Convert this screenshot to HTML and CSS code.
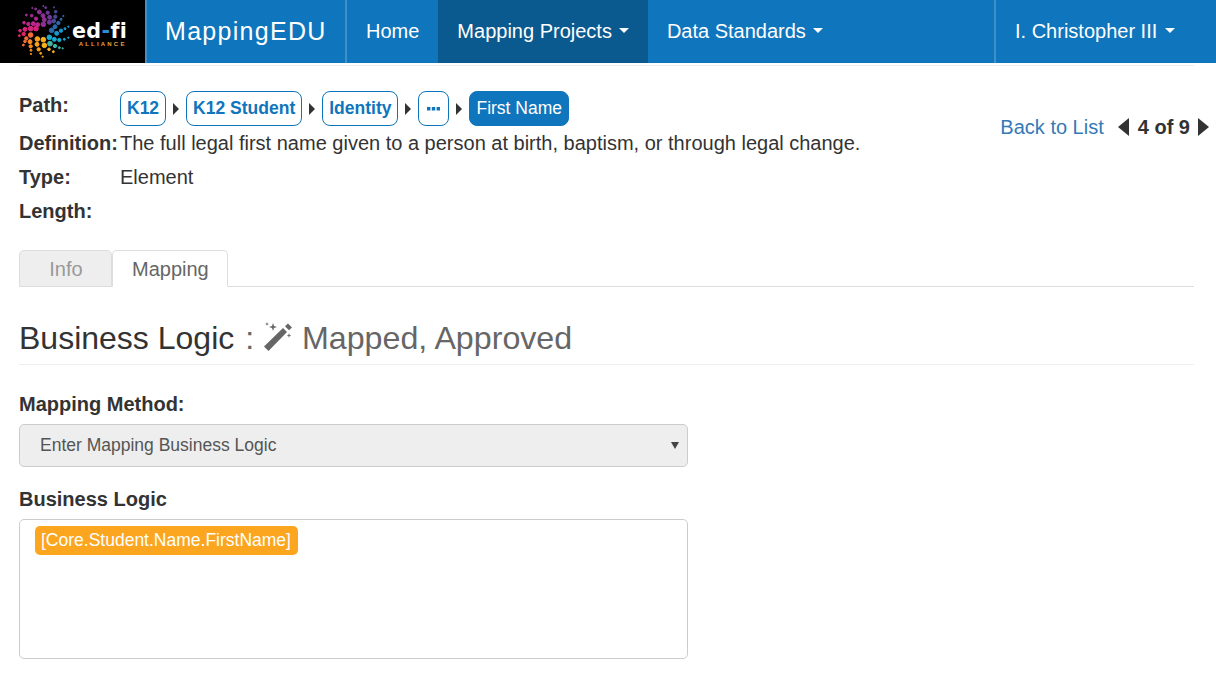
FILE: index.html
```html
<!DOCTYPE html>
<html lang="en">
<head>
    <meta charset="UTF-8">
    <title>MappingEDU</title>
    <link rel="stylesheet" href="styles.css">
</head>
<body>

    <nav class="navbar">
        <a class="logo" href="#">
            <svg viewBox="0 0 438 192" width="146" height="64">
                <g fill="#8e2f93" stroke="#8e2f93">
                    <circle cx="97" cy="24" r="2"/><circle cx="107" cy="27" r="3"/><circle cx="118" cy="36" r="6"/><circle cx="129" cy="47" r="6"/><circle cx="133" cy="59" r="6"/><circle cx="130" cy="73" r="7"/>
                </g>
                <g fill="#6f3a96" stroke="#6f3a96">
                    <circle cx="130" cy="18" r="2"/><circle cx="137" cy="23" r="3"/><circle cx="143" cy="38" r="5"/><circle cx="149" cy="52" r="6"/><circle cx="148" cy="67" r="6"/>
                </g>
                <g fill="#4a4a96" stroke="#4a4a96">
                    <circle cx="162" cy="22" r="2"/><circle cx="167" cy="35" r="4"/><circle cx="166" cy="50" r="5"/><circle cx="161" cy="63" r="6"/>
                </g>
                <g fill="#2a6cae" stroke="#2a6cae">
                    <circle cx="190" cy="48" r="2"/><circle cx="183" cy="58" r="3"/><circle cx="175" cy="69" r="5"/><circle cx="165" cy="80" r="6"/><circle cx="155" cy="91" r="7"/>
                </g>
                <g fill="#1a9ad0" stroke="#1a9ad0">
                    <circle cx="205" cy="80" r="2"/><circle cx="195" cy="86" r="3"/><circle cx="183" cy="92" r="5"/><circle cx="170" cy="100" r="6"/>
                </g>
                <g fill="#19aacf" stroke="#19aacf">
                    <circle cx="205" cy="113" r="2"/><circle cx="193" cy="118" r="3"/><circle cx="178" cy="120" r="5"/><circle cx="163" cy="118" r="6"/><circle cx="148" cy="112" r="7"/>
                </g>
                <g fill="#3fb5a5" stroke="#3fb5a5">
                    <circle cx="188" cy="145" r="2"/><circle cx="178" cy="143" r="3"/><circle cx="165" cy="138" r="5"/><circle cx="150" cy="131" r="7"/>
                </g>
                <g fill="#f7b21b" stroke="#f7b21b">
                    <circle cx="160" cy="155" r="3"/><circle cx="147" cy="148" r="4"/><circle cx="133" cy="136" r="7"/><circle cx="130" cy="119" r="7"/>
                </g>
                <g fill="#f9a11b" stroke="#f9a11b">
                    <circle cx="128" cy="170" r="2"/><circle cx="122" cy="160" r="3"/><circle cx="116" cy="148" r="5"/><circle cx="111" cy="133" r="6"/><circle cx="112" cy="117" r="7"/>
                </g>
                <g fill="#f58a1f" stroke="#f58a1f">
                    <circle cx="93" cy="162" r="2"/><circle cx="93" cy="151" r="3"/><circle cx="92" cy="139" r="5"/><circle cx="90" cy="125" r="6"/>
                </g>
                <g fill="#f26d3a" stroke="#f26d3a">
                    <circle cx="70" cy="135" r="3"/><circle cx="75" cy="124" r="4"/><circle cx="79" cy="115" r="5"/><circle cx="92" cy="105" r="7"/>
                </g>
                <g fill="#e5285f" stroke="#e5285f">
                    <circle cx="58" cy="107" r="3"/><circle cx="71" cy="102" r="5"/>
                </g>
                <g fill="#d9247c" stroke="#d9247c">
                    <circle cx="60" cy="92" r="4"/><circle cx="75" cy="88" r="6"/><circle cx="92" cy="86" r="7"/><circle cx="108" cy="86" r="7"/>
                </g>
                <g fill="#c0268f" stroke="#c0268f">
                    <circle cx="72" cy="68" r="4"/><circle cx="85" cy="72" r="5"/><circle cx="100" cy="71" r="6"/><circle cx="113" cy="74" r="6"/>
                </g>
                <g fill="#a92a94" stroke="#a92a94">
                    <circle cx="79" cy="45" r="3"/><circle cx="95" cy="47" r="4"/><circle cx="108" cy="56" r="5"/>
                </g>
                <text class="logo-name" x="216" y="113">ed<tspan class="logo-dash">-</tspan>fi</text>
                <text class="logo-sub" x="236" y="138">ALLIANCE</text>
            </svg>
        </a>
        <a class="brand" href="#">MappingEDU</a>
        <ul class="nav-links">
            <li><a href="#">Home</a></li>
            <li class="active"><a href="#">Mapping Projects <span class="caret"></span></a></li>
            <li><a href="#">Data Standards <span class="caret"></span></a></li>
        </ul>
        <a class="nav-user" href="#">I. Christopher III <span class="caret"></span></a>
    </nav>

    <div class="container">
        <div class="element-head">
            <div class="details">
                <div class="detail-row path-row">
                    <span class="detail-label">Path:</span>
                    <div class="path">
                        <a class="pill" href="#">K12</a>
                        <span class="arrow"></span>
                        <a class="pill" href="#">K12 Student</a>
                        <span class="arrow"></span>
                        <a class="pill" href="#">Identity</a>
                        <span class="arrow"></span>
                        <a class="pill pill-more" href="#">
                            <svg viewBox="0 0 13 4" width="13" height="4"><path d="M0 0h3.4v3.4H0zM4.8 0h3.4v3.4H4.8zM9.6 0H13v3.4H9.6z"/></svg>
                        </a>
                        <span class="arrow"></span>
                        <a class="pill pill-current" href="#">First Name</a>
                    </div>
                </div>
                <div class="detail-row">
                    <span class="detail-label">Definition:</span>
                    <span>The full legal first name given to a person at birth, baptism, or through legal change.</span>
                </div>
                <div class="detail-row">
                    <span class="detail-label">Type:</span>
                    <span>Element</span>
                </div>
                <div class="detail-row">
                    <span class="detail-label">Length:</span>
                </div>
            </div>
            <div class="pager">
                <a href="#">Back to List</a>
                <span class="pager-prev"></span>
                <b>4 of 9</b>
                <span class="pager-next"></span>
            </div>
        </div>

        <ul class="tabs">
            <li><a href="#">Info</a></li>
            <li class="active"><a href="#">Mapping</a></li>
        </ul>

        <h2 class="page-title">
            Business Logic <small>:
            <svg class="wand" viewBox="0 0 30 30" width="30" height="30">
                <path d="M1 24.5 20 6l4 4L5.500 29z"/>
                <path d="M22 4.200 25 1.500l4 4-3 2.800z"/>
                <path d="M10 1l1 3 3 1-3 1-1 3-1-3-3-1 3-1zM4 0l.5 1.500L6 2l-1.500.5L4 4l-.5-1.500L2 2l1.500-.5zM26 11l.6 1.900 1.900.6-1.900.6-.6 1.900-.6-1.900-1.900-.6 1.900-.6z"/>
            </svg>
            Mapped, Approved</small>
        </h2>

        <div class="form-group">
            <label>Mapping Method:</label>
            <div class="select-box">Enter Mapping Business Logic</div>
        </div>
        <div class="form-group">
            <label>Business Logic</label>
            <div class="logic-box">
                <span class="token">[Core.Student.Name.FirstName]</span>
            </div>
        </div>
    </div>

</body>
</html>
```

FILE: styles.css
```css
body {
    font-family: "Liberation Sans", Arial, sans-serif;
    font-size: 20px;
    line-height: 24px;
    color: #333;
    background-color: #fff;
    margin: 0;
}
a {
    text-decoration: none;
}
ul {
    list-style: none;
    margin: 0;
    padding: 0;
}
.navbar {
    display: flex;
    height: 63px;
    background-color: #0f75bc;
}
.navbar a {
    color: #fff;
}
.logo {
    display: block;
    width: 145px;
    height: 63px;
    overflow: hidden;
    background-color: #000;
}
.logo g {
    stroke-width: 3;
}
.logo-name {
    font-family: "DejaVu Sans", sans-serif;
    font-size: 62px;
    font-weight: bold;
    letter-spacing: 1px;
    fill: #fff;
}
.logo-dash {
    fill: #2a8fd0;
}
.logo-sub {
    font-family: "Liberation Sans", sans-serif;
    font-size: 18px;
    font-weight: bold;
    letter-spacing: 6.600px;
    fill: #e8a33a;
}
.brand {
    display: flex;
    align-items: center;
    width: 202px;
    box-sizing: border-box;
    padding: 0 0 2px 18px;
    border-left: 2px solid #3f90c9;
    border-right: 2px solid #3f90c9;
    font-size: 25px;
    letter-spacing: 1.300px;
}
.nav-links {
    display: flex;
    flex: 1;
}
.nav-links a {
    display: flex;
    align-items: center;
    gap: 4px;
    height: 63px;
    box-sizing: border-box;
    padding: 0 19px 2px;
}
.nav-links .active a {
    background-color: #0b5a8f;
}
.nav-user {
    display: flex;
    align-items: center;
    gap: 5px;
    width: 222px;
    box-sizing: border-box;
    padding: 0 0 2px 19px;
    border-left: 2px solid #3f90c9;
}
.caret {
    display: inline-block;
    margin-left: 3px;
    border-top: 5px solid #fff;
    border-left: 5px solid transparent;
    border-right: 5px solid transparent;
}
.container {
    padding: 2px 22px 0 19px;
}
.element-head {
    display: flex;
    justify-content: space-between;
    align-items: flex-start;
    padding-top: 25px;
    border-top: 1px solid #eee;
}
.detail-row {
    display: flex;
    height: 34px;
    box-sizing: border-box;
    padding-bottom: 2px;
    align-items: center;
}
.path-row {
    height: 35px;
    padding-bottom: 0;
    margin-bottom: 1px;
}
.path-row .detail-label {
    margin-top: -8px;
}
.detail-label {
    width: 101px;
    flex-shrink: 0;
    font-weight: bold;
}
.path {
    display: flex;
    align-items: center;
    gap: 7px;
}
.pill {
    display: flex;
    align-items: center;
    height: 35px;
    box-sizing: border-box;
    padding: 0 6px 2px;
    border: 1px solid #0f75bc;
    border-radius: 8px;
    color: #0f75bc;
    font-size: 17.500px;
    font-weight: bold;
}
.pill-more {
    padding: 0 8px;
}
.pill-more svg {
    fill: #0f75bc;
}
.pill-current {
    background-color: #0f75bc;
    color: #fff;
    font-weight: normal;
}
.arrow {
    border-left: 6px solid #333;
    border-top: 6px solid transparent;
    border-bottom: 6px solid transparent;
}
.pager {
    display: flex;
    align-items: center;
    margin: 24px -15px 0 0;
}
.pager a {
    color: #337ab7;
    margin-right: 14px;
}
.pager b {
    margin: 0 8px 0 9px;
}
.pager-prev {
    border-right: 11px solid #333;
    border-top: 9px solid transparent;
    border-bottom: 9px solid transparent;
}
.pager-next {
    border-left: 11px solid #333;
    border-top: 9px solid transparent;
    border-bottom: 9px solid transparent;
}
.tabs {
    display: flex;
    margin-top: 21px;
    height: 36px;
    border-bottom: 1px solid #ddd;
}
.tabs a {
    display: block;
    height: 37px;
    box-sizing: border-box;
    padding: 6px 18px 6px 19px;
    border: 1px solid #ddd;
    border-radius: 5px 5px 0 0;
}
.tabs li:first-child a {
    width: 93px;
    text-align: center;
    background-color: #eee;
    color: #999;
}
.tabs .active a {
    border-bottom-color: #fff;
    background-color: #fff;
    color: #666;
}
.page-title {
    margin: 31px 0 27px;
    padding-bottom: 6px;
    border-bottom: 1px solid #eee;
    font-size: 32px;
    line-height: 40px;
    font-weight: normal;
}
.page-title small {
    margin-left: 2px;
    font-size: 32.200px;
    color: #666;
}
.wand {
    fill: #666;
    vertical-align: -3px;
}
.form-group {
    width: 669px;
    margin-bottom: 20px;
}
.form-group label {
    display: block;
    margin-bottom: 8px;
    font-weight: bold;
}
.select-box {
    position: relative;
    height: 43px;
    box-sizing: border-box;
    padding: 8px 20px;
    border: 1px solid #ccc;
    border-radius: 5px;
    background-color: #eee;
    font-size: 17.500px;
    color: #555;
}
.select-box::after {
    content: "";
    position: absolute;
    right: 8px;
    top: 17px;
    border-top: 7px solid #444;
    border-left: 4px solid transparent;
    border-right: 4px solid transparent;
}
.logic-box {
    height: 140px;
    box-sizing: border-box;
    padding: 6px 15px;
    border: 1px solid #ccc;
    border-radius: 5px;
}
.token {
    display: block;
    width: fit-content;
    padding: 2px 7px 3px 6px;
    border-radius: 5px;
    background-color: #fca61f;
    color: #fff;
    font-size: 17.500px;
}
```
